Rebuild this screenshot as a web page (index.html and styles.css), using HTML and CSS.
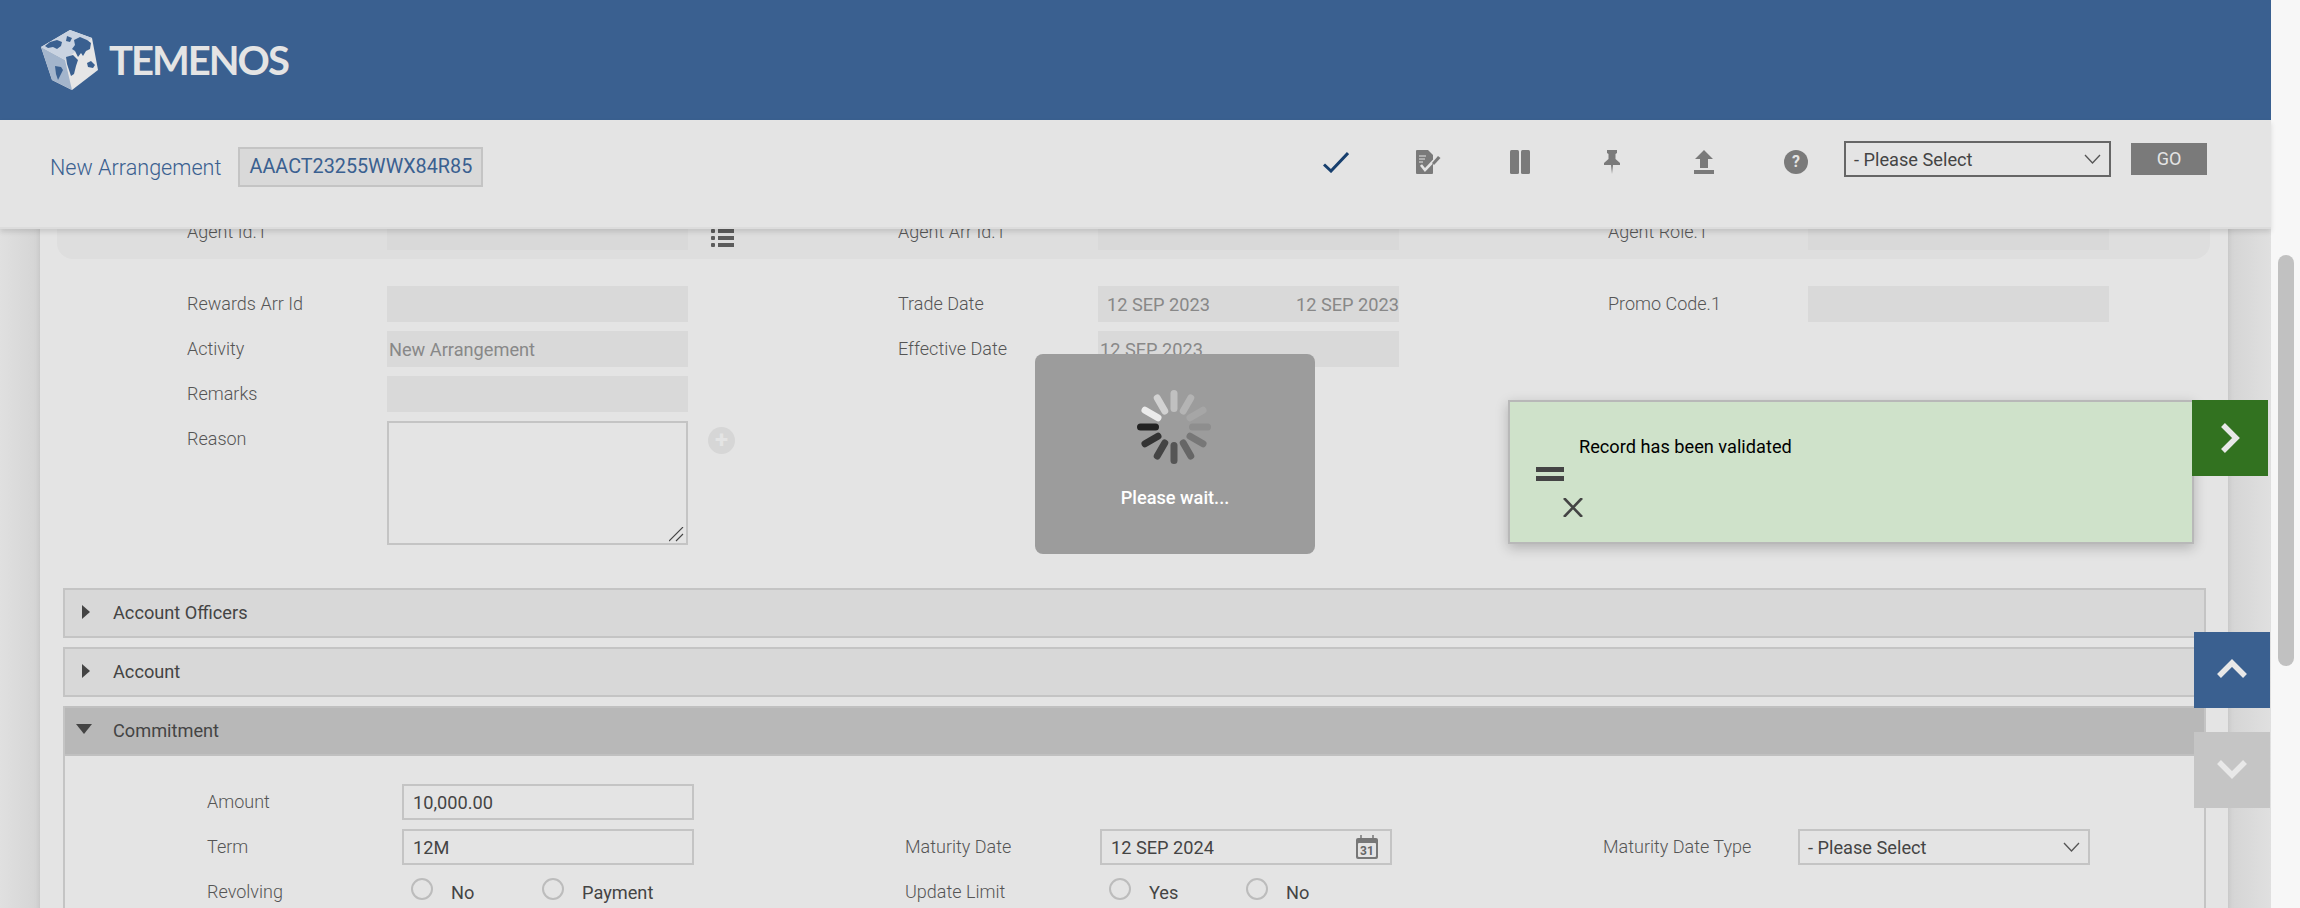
FILE: index.html
```html
<!DOCTYPE html>
<html lang="en">
<head>
    <meta charset="UTF-8" />
    <meta name="viewport" content="width=device-width, initial-scale=1" />
    <title>New Arrangement</title>
    <link rel="stylesheet" href="styles.css">
</head>
<body>
<div class="app">
    <div class="viewport">
        <header class="brand">
            <svg class="globe" viewBox="0 0 60 60" width="60" height="60">
                <path d="M30 0 52 8 58 40 32 60 12 50 1 17Z" fill="#e6e6e6"/>
                <path d="M1 17 25 30 32 60 12 50Z" fill="#a3b5cc"/>
                <path d="M30 0 52 8 25 30 1 17Z" fill="#c9d3e1"/>
                <path d="M34 10 40 7 47 10 51 13 50 19 46 21 43 26 41 23 38 27 35 21 32 19 35 15Z" fill="#3a6090"/>
                <path d="M26 27 33 25 38 30 36 36 34 44 31 46 29 40 27 34Z" fill="#3a6090"/>
                <path d="M15 36 21 37 23 40 20 46 18 50 16 44Z" fill="#3a6090"/>
                <path d="M5 16 10 12 17 10 22 12 21 16 17 19 13 17 8 18Z" fill="#3a6090"/>
                <path d="M27 6 32 8 30 12 26 11Z" fill="#3a6090"/>
                <path d="M47 33 51 31 55 35 53 38 48 37Z" fill="#3a6090"/>
            </svg>
            <span class="brand-name">TEMENOS</span>
        </header>

        <div class="toolbar">
            <div class="toolbar-title">
                <span class="page-name">New Arrangement</span>
                <span class="record-id">AAACT23255WWX84R85</span>
            </div>
            <div class="toolbar-actions">
                <span class="tool">
                    <svg width="26" height="22" viewBox="0 0 26 22"><path d="M1 13.5 8 20 25 2" fill="none" stroke="#173f6e" stroke-width="3"/></svg>
                </span>
                <span class="tool">
                    <svg width="26" height="24" viewBox="0 0 26 24">
                        <path d="M1 1a1 1 0 0 1 1-1H13L18 5V23a1 1 0 0 1-1 1H2a1 1 0 0 1-1-1Z" fill="#7a7a7a"/>
                        <path d="M4 6H11M4 9H10M4 12H8" stroke="#e4e4e4" stroke-width="1"/>
                        <path d="M6 15 10 20 19 10.5" fill="none" stroke="#e4e4e4" stroke-width="2.6"/>
                        <path d="M17 13 23 6 25.5 8 19 15Z" fill="#7a7a7a"/>
                    </svg>
                </span>
                <span class="tool">
                    <svg width="20" height="24" viewBox="0 0 20 24"><rect width="9" height="24" rx="1.5" fill="#7a7a7a"/><rect x="11" width="9" height="24" rx="1.5" fill="#7a7a7a"/></svg>
                </span>
                <span class="tool">
                    <svg width="16" height="24" viewBox="0 0 16 24"><path d="M3 0H13V3L11.500 4V9L16 13V15H9L8 24 7 15H0V13L4.500 9V4L3 3Z" fill="#7a7a7a"/></svg>
                </span>
                <span class="tool">
                    <svg width="20" height="24" viewBox="0 0 20 24"><path d="M10 0 19 9H14V18H6V9H1Z" fill="#7a7a7a"/><rect y="20" width="20" height="4" fill="#7a7a7a"/></svg>
                </span>
                <span class="tool"><span class="help">?</span></span>
                <div class="select select-dark">
                    <span>- Please Select</span>
                    <svg width="17" height="10" viewBox="0 0 17 10"><path d="M1 1 8.500 9 16 1" fill="none" stroke="#555" stroke-width="1.300"/></svg>
                </div>
                <span class="go-btn">GO</span>
            </div>
        </div>

        <main class="main">
            <div class="card">
                <div class="band">
                    <div class="form-grid form-top">
                        <label>Agent Id.1</label><div class="field locked"></div><span class="list-icon"><i></i><i></i><i></i></span>
                        <label>Agent Arr Id.1</label><div class="field locked"></div><span></span>
                        <label>Agent Role.1</label><div class="field locked"></div>
                    </div>
                </div>

                <div class="form-grid form-top form-main">
                    <label>Rewards Arr Id</label><div class="field locked"></div><span></span>
                    <label>Trade Date</label><div class="field locked date-pair"><span>12 SEP 2023</span><span>12 SEP 2023</span></div><span></span>
                    <label>Promo Code.1</label><div class="field locked"></div>

                    <label>Activity</label><div class="field locked flush">New Arrangement</div><span></span>
                    <label>Effective Date</label><div class="field locked flush">12 SEP 2023</div><span></span>
                    <span></span><span></span>

                    <label>Remarks</label><div class="field locked"></div><span></span>
                    <span></span><span></span><span></span><span></span><span></span>

                    <label>Reason</label>
                    <div class="reason-wrap">
                        <textarea class="reason"></textarea>
                        <svg class="grip" width="15" height="15" viewBox="0 0 15 15"><path d="M14 0 0 14M14 7 7 14" stroke="#444" stroke-width="1.100"/></svg>
                    </div>
                    <span class="add-btn">+</span>
                </div>

                <section class="acc">
                    <div class="acc-head"><span class="tri tri-right"></span>Account Officers</div>
                </section>
                <section class="acc">
                    <div class="acc-head"><span class="tri tri-right"></span>Account</div>
                </section>
                <section class="acc acc-open">
                    <div class="acc-head"><span class="tri tri-down"></span>Commitment</div>
                    <div class="form-grid form-commit">
                        <label>Amount</label><div class="field">10,000.00</div><span></span>
                        <span></span><span></span><span></span><span></span><span></span>

                        <label>Term</label><div class="field">12M</div><span></span>
                        <label>Maturity Date</label>
                        <div class="field field-date">12 SEP 2024
                            <svg width="22" height="24" viewBox="0 0 22 24">
                                <path d="M2 3H20a2 2 0 0 1 2 2V22a2 2 0 0 1-2 2H2a2 2 0 0 1-2-2V5A2 2 0 0 1 2 3Z" fill="#777"/>
                                <rect x="2" y="8" width="18" height="14" rx="1" fill="#e4e4e4"/>
                                <path d="M5 0V5M17 0V5" stroke="#777" stroke-width="1.500"/>
                                <text x="11" y="20" text-anchor="middle" class="cal-day">31</text>
                            </svg>
                        </div><span></span>
                        <label>Maturity Date Type</label>
                        <div class="select">
                            <span>- Please Select</span>
                            <svg width="17" height="10" viewBox="0 0 17 10"><path d="M1 1 8.500 9 16 1" fill="none" stroke="#555" stroke-width="1.300"/></svg>
                        </div>

                        <label>Revolving</label>
                        <div class="radios">
                            <span class="radio radio-wide"><i></i>No</span>
                            <span class="radio"><i></i>Payment</span>
                        </div><span></span>
                        <label>Update Limit</label>
                        <div class="radios radios-alt">
                            <span class="radio"><i></i>Yes</span>
                            <span class="radio"><i></i>No</span>
                        </div>
                    </div>
                </section>
            </div>
        </main>
    </div>
    <div class="scrollbar"><div class="thumb"></div></div>
</div>

<!-- things floating over the page -->
<div class="wait">
    <svg class="spinner" width="80" height="80" viewBox="-40 -40 80 80">
        <g stroke-width="7" stroke-linecap="round">
            <path d="M-18.500 0H-33.500" stroke="#222"/>
            <path d="M-18.500 0H-33.500" stroke="#333" transform="rotate(-30)"/>
            <path d="M-18.500 0H-33.500" stroke="#444" transform="rotate(-60)"/>
            <path d="M-18.500 0H-33.500" stroke="#555" transform="rotate(-90)"/>
            <path d="M-18.500 0H-33.500" stroke="#666" transform="rotate(-120)"/>
            <path d="M-18.500 0H-33.500" stroke="#777" transform="rotate(-150)"/>
            <path d="M-18.500 0H-33.500" stroke="#8e8e8e" transform="rotate(180)"/>
            <path d="M-18.500 0H-33.500" stroke="#a6a6a6" transform="rotate(150)"/>
            <path d="M-18.500 0H-33.500" stroke="#b4b4b4" transform="rotate(120)"/>
            <path d="M-18.500 0H-33.500" stroke="#c0c0c0" transform="rotate(90)"/>
            <path d="M-18.500 0H-33.500" stroke="#d2d2d2" transform="rotate(60)"/>
            <path d="M-18.500 0H-33.500" stroke="#ebebeb" transform="rotate(30)"/>
        </g>
    </svg>
    <div class="wait-text">Please wait...</div>
</div>

<div class="notice">
    <span class="notice-bars"></span>
    <span class="notice-text">Record has been validated</span>
    <svg class="notice-close" width="20" height="19" viewBox="0 0 20 19"><path d="M1 0 19 19M19 0 1 19" stroke="#444" stroke-width="2.600"/></svg>
</div>
<div class="side-btn side-green">
    <svg width="20" height="32" viewBox="0 0 20 32"><path d="M3 3 16 16 3 29" fill="none" stroke="#e8e8e8" stroke-width="5.500"/></svg>
</div>
<div class="side-btn side-up">
    <svg width="32" height="20" viewBox="0 0 32 20"><path d="M3 17 16 4 29 17" fill="none" stroke="#e8e8e8" stroke-width="5.500"/></svg>
</div>
<div class="side-btn side-down">
    <svg width="32" height="20" viewBox="0 0 32 20"><path d="M3 3 16 16 29 3" fill="none" stroke="#e8e8e8" stroke-width="5.500"/></svg>
</div>
</body>
</html>
```

FILE: styles.css
```css
html, body {
    margin: 0;
    height: 100%;
    overflow: hidden;
}
body {
    font-family: Roboto, Arial, sans-serif;
    font-size: 18.2px;
    color: #555;
    background: #e4e4e4;
}
.app {
    display: flex;
    height: 908px;
}
.viewport {
    flex: 1;
    display: flex;
    flex-direction: column;
    min-width: 0;
}

/* header */
.brand {
    height: 120px;
    flex: none;
    background: #3a6090;
    display: flex;
    align-items: center;
    padding-left: 40px;
    box-sizing: border-box;
}
.brand-name {
    margin-left: 9px;
    font-family: Lato, sans-serif;
    font-weight: 700;
    font-size: 40px;
    letter-spacing: -2px;
    color: #e4e4e4;
}

/* toolbar */
.toolbar {
    height: 109px;
    flex: none;
    box-sizing: border-box;
    display: flex;
    justify-content: space-between;
    background: #e4e4e4;
    border-bottom: 2px solid #dcdcdc;
    box-shadow: 0 3px 5px rgba(0, 0, 0, 0.12);
    position: relative;
    z-index: 2;
}
.toolbar-title {
    display: flex;
    align-items: center;
    gap: 17px;
    padding: 27px 0 0 50px;
    height: 40px;
}
.page-name {
    font-size: 21.6px;
    font-weight: 300;
    color: #3a6090;
}
.record-id {
    border: 2px solid #c4c4c4;
    background: #d9d9d9;
    width: 245px;
    height: 40px;
    box-sizing: border-box;
    line-height: 36px;
    text-align: center;
    font-size: 19.8px;
    color: #3a6090;
}
.toolbar-actions {
    display: flex;
    align-items: flex-start;
    padding: 21px 64px 0 0;
}
.tool {
    width: 92px;
    height: 36px;
    margin-top: 3px;
    display: flex;
    align-items: center;
    justify-content: center;
}
.help {
    width: 24px;
    height: 24px;
    border-radius: 50%;
    background: #7a7a7a;
    color: #e4e4e4;
    font-size: 16px;
    font-weight: 700;
    line-height: 24px;
    text-align: center;
}
.select {
    height: 36px;
    box-sizing: border-box;
    border: 2px solid #c4c4c4;
    padding: 0 8px;
    display: flex;
    align-items: center;
    justify-content: space-between;
    color: #444;
}
.select-dark {
    width: 267px;
    border-color: #666;
    margin-left: 2px;
}
.go-btn {
    width: 76px;
    height: 32px;
    margin: 2px 0 0 20px;
    background: #7a7a7a;
    color: #e4e4e4;
    text-align: center;
    line-height: 32px;
    font-size: 18px;
}

/* main area, content is scrolled so the first row sits under the toolbar */
.main {
    flex: 1;
    min-height: 0;
    overflow: hidden;
    padding: 0 43px 0 40px;
    background: linear-gradient(90deg, #e0e0e0, #d4d4d4 40px, #d4d4d4 2228px, #e0e0e0);
}
.card {
    background: #e4e4e4;
    height: 900px;
    box-shadow: 0 0 6px rgba(0, 0, 0, 0.1);
}
.band {
    margin: -24px 18px 0 17px;
    padding: 9px 0 9px 130px;
    background: #dedede;
    border-radius: 0 0 16px 16px;
}
.form-grid {
    display: grid;
    row-gap: 9px;
    align-items: center;
}
label {
    font-size: 18px;
    font-weight: 300;
    color: #555;
}
.band label, .form-commit label {
    padding-bottom: 2px;
}
.form-top {
    grid-template-columns: 200px 301px 210px 200px 301px 209px 200px 301px;
}
.form-main {
    margin: 27px 0 43px 147px;
    align-items: start;
}
.form-main label {
    line-height: 36px;
}
.field {
    height: 36px;
    box-sizing: border-box;
    border: 2px solid #c4c4c4;
    padding: 0 9px;
    display: flex;
    align-items: center;
    color: #444;
}
.locked {
    border: 0;
    background: #d9d9d9;
    color: #888;
}
.flush {
    padding: 0 2px;
}
.date-pair {
    justify-content: space-between;
    padding: 0 0 0 9px;
    white-space: nowrap;
}
.field-date {
    justify-content: space-between;
    padding-right: 12px;
}
.cal-day {
    font-size: 12px;
    font-weight: 700;
    fill: #666;
}
.list-icon {
    display: flex;
    flex-direction: column;
    gap: 3px;
    margin: 0 0 3px 23px;
    align-self: end;
}
.list-icon i {
    display: block;
    width: 23px;
    height: 4px;
    background: radial-gradient(circle at 2px 2px, #5c5c5c 2px, transparent 2.500px) no-repeat,
                linear-gradient(#5c5c5c, #5c5c5c) 7px 0 / 16px 4px no-repeat;
}
.reason-wrap {
    position: relative;
    width: 301px;
    height: 124px;
}
.reason {
    width: 100%;
    height: 100%;
    box-sizing: border-box;
    border: 2px solid #c4c4c4;
    background: transparent;
    border-radius: 0;
    margin: 0;
    display: block;
    resize: none;
}
.grip {
    position: absolute;
    right: 4px;
    bottom: 3px;
}
.add-btn {
    width: 27px;
    height: 27px;
    margin: 6px 0 0 20px;
    border-radius: 50%;
    background: #d6d6d6;
    color: #e4e4e4;
    font-size: 24px;
    font-weight: 700;
    line-height: 26px;
    text-align: center;
}

/* accordions */
.acc {
    margin: 0 22px 9px 23px;
}
.acc-head {
    height: 50px;
    box-sizing: border-box;
    border: 2px solid #c4c4c4;
    background: #d8d8d8;
    display: flex;
    align-items: center;
    color: #444;
    position: relative;
    padding: 0 0 2px 48px;
}
.tri {
    position: absolute;
    width: 0;
    height: 0;
}
.tri-right {
    left: 17px;
    top: 15px;
    border-left: 8px solid #444;
    border-top: 7px solid transparent;
    border-bottom: 7px solid transparent;
}
.tri-down {
    left: 11px;
    top: 16px;
    border-top: 10px solid #444;
    border-left: 8px solid transparent;
    border-right: 8px solid transparent;
}
.acc-open .acc-head {
    background: #b8b8b8;
    border-color: #c0c0c0;
    border-width: 2px 0;
}
.acc-open {
    border: solid #c4c4c4;
    border-width: 0 2px;
}
.form-commit {
    grid-template-columns: 195px 292px 211px 195px 292px 211px 195px 292px;
    grid-auto-rows: 36px;
    padding: 28px 0 0 142px;
}
.radios {
    display: flex;
    align-items: center;
    padding-left: 9px;
}
.radios-alt .radio {
    width: 137px;
}
.radio {
    display: flex;
    align-items: center;
    color: #444;
    width: 131px;
}
.radio i {
    width: 22px;
    height: 22px;
    box-sizing: border-box;
    border: 2px solid #bcbcbc;
    border-radius: 50%;
    margin: -6px 18px 0 0;
}

/* scrollbar */
.scrollbar {
    width: 29px;
    flex: none;
    background: #f7f7f7;
    position: relative;
}
.thumb {
    position: absolute;
    left: 7px;
    top: 255px;
    width: 16px;
    height: 411px;
    border-radius: 8px;
    background: #c1c1c1;
}

/* wait popup */
.wait {
    position: absolute;
    left: 1035px;
    top: 354px;
    width: 280px;
    height: 200px;
    border-radius: 8px;
    background: #9c9c9c;
    z-index: 5;
    color: #fff;
    text-align: center;
}
.spinner {
    display: block;
    margin: 33px 0 0 99px;
}
.wait-text {
    font-weight: 500;
    margin-top: 20px;
}

/* validation message */
.notice {
    position: absolute;
    left: 1508px;
    top: 400px;
    width: 686px;
    height: 144px;
    box-sizing: border-box;
    background: #cfe2ca;
    border: 2px solid #b8b8b8;
    box-shadow: 0 4px 12px rgba(0, 0, 0, 0.22);
    z-index: 4;
}
.notice-text {
    position: absolute;
    left: 69px;
    top: 34px;
    color: #000;
}
.notice-bars {
    position: absolute;
    left: 26px;
    top: 65px;
    width: 28px;
    height: 14px;
    border: solid #444;
    border-width: 5px 0;
    box-sizing: border-box;
}
.notice-close {
    position: absolute;
    left: 53px;
    top: 96px;
}
.side-btn {
    position: absolute;
    width: 76px;
    height: 76px;
    display: flex;
    align-items: center;
    justify-content: center;
    z-index: 4;
}
.side-green {
    left: 2192px;
    top: 400px;
    background: #327220;
}
.side-up {
    left: 2194px;
    top: 632px;
    background: #3a6090;
    padding-bottom: 3px;
    box-sizing: border-box;
}
.side-down {
    left: 2194px;
    top: 732px;
    background: #c5c5c5;
    padding-bottom: 3px;
    box-sizing: border-box;
}
```
